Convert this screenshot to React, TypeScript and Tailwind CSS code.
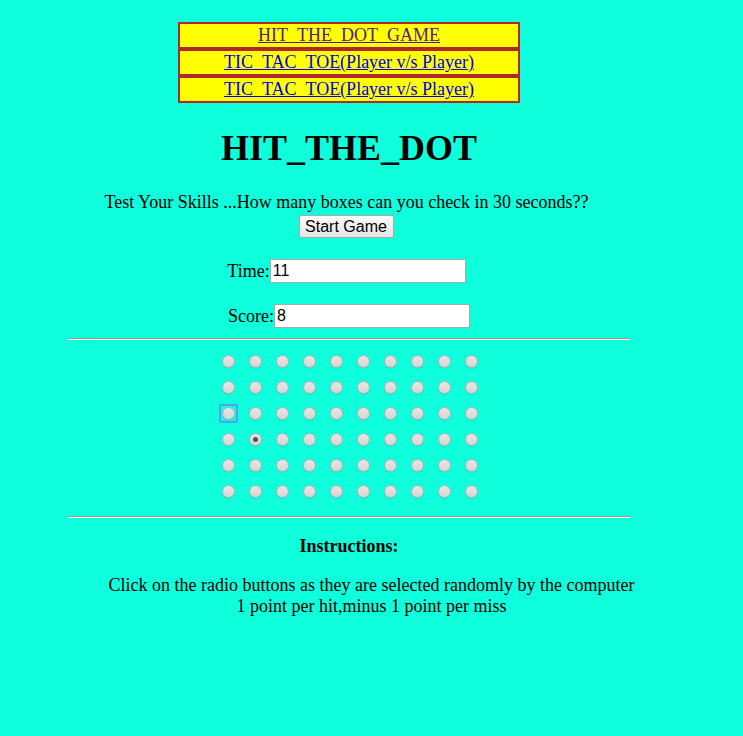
import { useState } from "react";

const links = [
  { label: "HIT_THE_DOT_GAME", visited: true },
  { label: "TIC_TAC_TOE(Player v/s Player)", visited: false },
  { label: "TIC_TAC_TOE(Player v/s Player)", visited: false },
];

const ROWS = 6;
const COLS = 10;

const Dot = ({ checked, focused }: { checked: boolean; focused: boolean }) => {
  return (
    <div className="relative flex h-[13px] w-[13px] items-center justify-center">
      {focused && (
        <div className="absolute -inset-[3px] rounded-[2px] border-2 border-[#4da3f0]" />
      )}
      <div className="flex h-[13px] w-[13px] items-center justify-center rounded-full border border-[#b9aeb0] bg-[linear-gradient(#e6e6e6,#d6d6d6)] shadow-[0_1px_0_rgba(0,0,0,0.08)]">
        {checked && <div className="h-[5px] w-[5px] rounded-full bg-[#555]" />}
      </div>
    </div>
  );
};

export default function App() {
  const [time] = useState("11");
  const [score] = useState("8");

  return (
    <div className="min-h-screen bg-[#0fffdc] text-[18px] leading-[21px] text-black [font-family:'Liberation_Serif',serif]">
      <div className="ml-[68px] w-[562px] pt-[22px]">
        <div className="mx-auto w-[342px]">
          {links.map((l, i) => (
            <div
              key={i}
              className="flex h-[27px] items-center justify-center border-2 border-[#b0282a] bg-[#ffff00]"
            >
              <a
                href="#"
                className={l.visited ? "text-[#551a8b] underline" : "text-[#0000ee] underline"}
              >
                {l.label}
              </a>
            </div>
          ))}
        </div>

        <h1 className="mt-[24px] text-center text-[36px] font-bold leading-[42px]">HIT_THE_DOT</h1>

        <p className="mt-[23px] pr-[5px] text-center">
          Test Your Skills ...How many boxes can you check in 30 seconds??
        </p>
        <div className="mt-[2px] flex justify-center pr-[6px]">
          <button className="h-[23px] w-[95px] rounded-[2px] border border-[#a9a9a9] bg-[linear-gradient(#fdfdfd,#e3e3e3)] text-[16px] leading-[19px] [font-family:'Liberation_Sans',sans-serif]">
            Start Game
          </button>
        </div>

        <div className="mt-[21px] flex items-center justify-center pr-[5px]">
          <span>Time:</span>
          <input
            readOnly
            value={time}
            className="h-[24px] w-[196px] border border-[#a9a9a9] bg-white px-[2px] text-[16px] [font-family:'Liberation_Sans',sans-serif] outline-none"
          />
        </div>

        <div className="mt-[21px] flex items-center justify-center">
          <span>Score:</span>
          <input
            readOnly
            value={score}
            className="h-[24px] w-[196px] border border-[#a9a9a9] bg-white px-[2px] text-[16px] [font-family:'Liberation_Sans',sans-serif] outline-none"
          />
        </div>

        <div className="mt-[10px] border-t border-b border-t-[#9a9a9a] border-b-[#eeeeee]" />

        <div className="ml-[154px] mt-[15px] grid w-[256px] grid-cols-[repeat(10,13px)] gap-x-[14px] gap-y-[13px]">
          {Array.from({ length: ROWS * COLS }).map((_, i) => {
            const r = Math.floor(i / COLS);
            const c = i % COLS;
            return <Dot key={i} checked={r === 3 && c === 1} focused={r === 2 && c === 0} />;
          })}
        </div>

        <div className="mt-[18px] border-t border-b border-t-[#9a9a9a] border-b-[#eeeeee]" />

        <p className="mt-[18px] text-center font-bold">Instructions:</p>
      </div>

      <div className="mt-[18px] text-center">
        <p>Click on the radio buttons as they are selected randomly by the computer</p>
        <p>1 point per hit,minus 1 point per miss</p>
      </div>
    </div>
  );
}
